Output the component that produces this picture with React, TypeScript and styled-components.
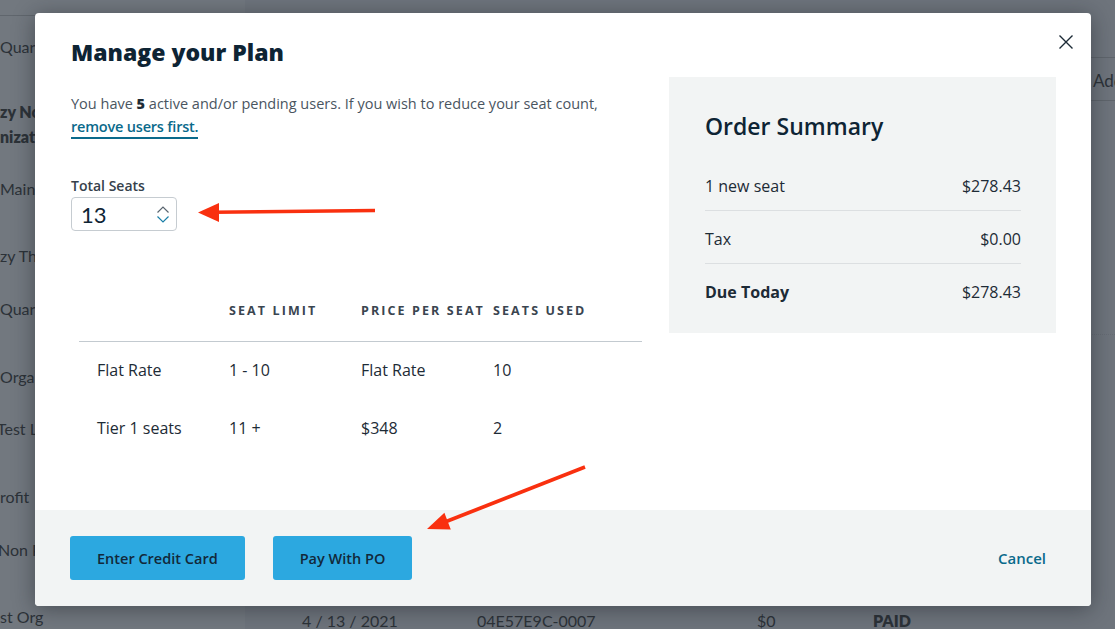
import React from "react";
import styled, { createGlobalStyle } from "styled-components";

const GlobalStyle = createGlobalStyle`
  html, body { margin: 0; padding: 0; }
  body {
    font-family: "Lato", "Open Sans", sans-serif;
    background: #6e747c;
    overflow: hidden;
    width: 1115px;
    height: 629px;
  }
  #root { width: 1115px; height: 629px; }
  * { box-sizing: border-box; }
`;

/* ---------- background page (behind the overlay) ---------- */

const Page = styled.div`
  display: grid;
  grid-template-columns: 245px 1fr;
  width: 1115px;
  height: 629px;
  overflow: hidden;
  color: #2c3238;
  font-size: 16px;
`;

const Sidebar = styled.aside`
  background: #72787f;
  display: flex;
  flex-direction: column;
  overflow: hidden;
`;

const SidebarHead = styled.div`
  height: 16px;
  flex-shrink: 0;
  border-bottom: 1px solid #60666d;
`;

const SideItem = styled.div<{ $gap: number; $shift?: number; $bold?: boolean }>`
  flex-shrink: 0;
  margin-top: ${(p) => p.$gap}px;
  margin-left: ${(p) => p.$shift ?? 0}px;
  line-height: ${(p) => (p.$bold ? 25 : 24)}px;
  font-weight: ${(p) => (p.$bold ? 800 : 400)};
  white-space: nowrap;
`;

const Main = styled.main`
  display: flex;
  flex-direction: column;
  overflow: hidden;
`;

const HeadBand = styled.div`
  flex-shrink: 0;
  margin-top: 57px;
  height: 44px;
  border-top: 1px solid #5f656c;
  border-bottom: 1px solid #5f656c;
  display: flex;
  align-items: center;
  padding: 3px 0 0 848px;
  white-space: nowrap;
  font-size: 17px;
`;

const FaintRule = styled.div`
  flex-shrink: 0;
  margin-top: 233px;
  border-top: 1px dotted #666c74;
`;

const BottomRow = styled.div`
  flex-shrink: 0;
  margin-top: 274px;
  display: grid;
  grid-template-columns: 175px 280px 116px auto;
  padding-left: 57px;
  line-height: 24px;
  font-size: 16px;
  white-space: nowrap;
`;

const Strong = styled.span`
  font-weight: 800;
`;

/* ---------- modal ---------- */

const Modal = styled.section`
  position: absolute;
  left: 35px;
  top: 13px;
  width: 1056px;
  height: 593px;
  background: #ffffff;
  border-radius: 4px;
  box-shadow: 0 3px 22px rgba(20, 24, 30, 0.45);
  display: flex;
  flex-direction: column;
  overflow: hidden;
  color: #1d2b36;
  font-family: "Open Sans", "Lato", sans-serif;
`;

const CloseButton = styled.button`
  position: absolute;
  top: 22px;
  right: 18px;
  width: 14px;
  height: 14px;
  padding: 0;
  border: 0;
  background: none;
  display: flex;
  cursor: pointer;
`;

const ModalBody = styled.div`
  flex: 1;
  display: grid;
  grid-template-columns: 1fr 387px;
  column-gap: 27px;
  padding: 0 35px 0 36px;
`;

const LeftCol = styled.div`
  display: flex;
  flex-direction: column;
  padding-top: 25px;
`;

const Title = styled.h1`
  margin: 0;
  font-size: 23px;
  line-height: 28px;
  font-weight: 800;
  color: #0e2434;
`;

const Intro = styled.p`
  margin: 26px 0 0;
  font-size: 14.5px;
  line-height: 23px;
  color: #4a555f;
`;

const Bold = styled.b`
  font-weight: 800;
  color: #1d2b36;
`;

const TextLink = styled.a`
  color: #0a6a8b;
  font-weight: 600;
  letter-spacing: -0.2px;
  text-decoration: none;
  border-bottom: 2px solid #0a6a8b;
  padding-bottom: 1px;
`;

const FieldLabel = styled.label`
  margin-top: 39px;
  display: block;
  font-size: 14px;
  line-height: 18px;
  font-weight: 600;
  color: #36414b;
`;

const NumberBox = styled.div`
  margin-top: 2px;
  width: 106px;
  height: 34px;
  border: 1px solid #c6ccd1;
  border-radius: 4px;
  display: flex;
  align-items: center;
  justify-content: space-between;
  padding: 0 6px 0 9px;
  font-family: "Lato", sans-serif;
  font-size: 22px;
  color: #0e2434;
`;

const Table = styled.div`
  margin: 72px 0 0 8px;
  display: grid;
  grid-template-columns: 150px 132px 132px 1fr;
`;

const HeadCell = styled.div<{ $first?: boolean }>`
  padding: 0 0 22px ${(p) => (p.$first ? 18 : 0)}px;
  line-height: 16px;
  font-size: 12.5px;
  font-weight: 700;
  letter-spacing: 2.1px;
  color: #3a4550;
  border-bottom: 1px solid #c3cad0;
  white-space: nowrap;
`;

const Cell = styled.div<{ $first?: boolean }>`
  padding: 18px 0 20px ${(p) => (p.$first ? 18 : 0)}px;
  line-height: 20px;
  font-size: 16px;
  color: #1d2b36;
`;

const Summary = styled.aside`
  margin-top: 64px;
  height: 256px;
  background: #f2f4f4;
  padding: 35px 35px 0 36px;
  display: flex;
  flex-direction: column;
`;

const SummaryTitle = styled.h2`
  margin: 0 0 18px;
  font-size: 23px;
  line-height: 28px;
  font-weight: 600;
  color: #0e2434;
`;

const SummaryRow = styled.div<{ $last?: boolean }>`
  display: flex;
  justify-content: space-between;
  padding: 18px 0 13px;
  line-height: 21px;
  font-size: 16px;
  color: #1d2b36;
  border-bottom: ${(p) => (p.$last ? "none" : "1px solid #dcdfe1")};
`;

const SummaryLabel = styled.span<{ $bold?: boolean }>`
  font-weight: ${(p) => (p.$bold ? 700 : 400)};
`;

const Footer = styled.footer`
  height: 96px;
  flex-shrink: 0;
  background: #f2f4f4;
  display: flex;
  align-items: center;
  gap: 28px;
  padding: 0 45px 0 35px;
`;

const PrimaryButton = styled.button`
  height: 44px;
  padding: 0 27px;
  border: 0;
  border-radius: 3px;
  background: #2ca8e0;
  color: #12283a;
  font-family: inherit;
  font-size: 14.5px;
  font-weight: 600;
  cursor: pointer;
`;

const CancelLink = styled.a`
  margin-left: auto;
  color: #0a6a8b;
  font-size: 15px;
  font-weight: 600;
  text-decoration: none;
`;

const Annotations = styled.svg`
  position: fixed;
  left: 0;
  top: 0;
  width: 1115px;
  height: 629px;
  pointer-events: none;
`;

const sideItems = [
  { text: "Quarte", gap: 19 },
  { text: "zy No", text2: "nizati", gap: 40, bold: true },
  { text: "Main", gap: 28 },
  { text: "zy Th", gap: 43 },
  { text: "Quart", gap: 29 },
  { text: "Orga", gap: 44 },
  { text: "Test L", gap: 28, shift: -3 },
  { text: "rofit", gap: 44 },
  { text: "Non P", gap: 29, shift: -2 },
  { text: "st Org", gap: 43 },
];

const tiers = [
  ["Flat Rate", "1 - 10", "Flat Rate", "10"],
  ["Tier 1 seats", "11 +", "$348", "2"],
];

const summary = [
  { label: "1 new seat", value: "$278.43" },
  { label: "Tax", value: "$0.00" },
  { label: "Due Today", value: "$278.43", bold: true },
];

export default function App() {
  return (
    <>
      <GlobalStyle />
      <Page>
        <Sidebar>
          <SidebarHead />
          {sideItems.map((it, i) => (
            <SideItem key={i} $gap={it.gap} $shift={it.shift} $bold={it.bold}>
              {it.text}
              {it.text2 && (
                <>
                  <br />
                  {it.text2}
                </>
              )}
            </SideItem>
          ))}
        </Sidebar>
        <Main>
          <HeadBand>Add</HeadBand>
          <FaintRule />
          <BottomRow>
            <span>4 / 13 / 2021</span>
            <span>04E57E9C-0007</span>
            <span>$0</span>
            <Strong>PAID</Strong>
          </BottomRow>
        </Main>
      </Page>

      <Modal role="dialog" aria-label="Manage your Plan">
        <CloseButton aria-label="Close">
          <svg width="14" height="14" viewBox="0 0 14 14">
            <path d="M0.5 0.5 L13.5 13.5 M13.5 0.5 L0.5 13.5" stroke="#1c2a36" strokeWidth="1.4" fill="none" />
          </svg>
        </CloseButton>
        <ModalBody>
          <LeftCol>
            <Title>Manage your Plan</Title>
            <Intro>
              You have <Bold>5</Bold> active and/or pending users. If you wish to reduce your seat count,
              <br />
              <TextLink href="#">remove users first.</TextLink>
            </Intro>
            <FieldLabel>Total Seats</FieldLabel>
            <NumberBox>
              <span>13</span>
              <svg width="14" height="19" viewBox="0 0 14 19">
                <path d="M1.5 7.5 L7 2 L12.5 7.5" stroke="#5a6670" strokeWidth="1.2" fill="none" />
                <path d="M1.5 11.5 L7 17 L12.5 11.5" stroke="#1b7fa7" strokeWidth="1.2" fill="none" />
              </svg>
            </NumberBox>
            <Table>
              <HeadCell $first />
              <HeadCell>SEAT LIMIT</HeadCell>
              <HeadCell>PRICE PER SEAT</HeadCell>
              <HeadCell>SEATS USED</HeadCell>
              {tiers.map((row, r) =>
                row.map((c, i) => (
                  <Cell key={`${r}-${i}`} $first={i === 0}>
                    {c}
                  </Cell>
                ))
              )}
            </Table>
          </LeftCol>
          <Summary>
            <SummaryTitle>Order Summary</SummaryTitle>
            {summary.map((s, i) => (
              <SummaryRow key={s.label} $last={i === summary.length - 1}>
                <SummaryLabel $bold={s.bold}>{s.label}</SummaryLabel>
                <span>{s.value}</span>
              </SummaryRow>
            ))}
          </Summary>
        </ModalBody>
        <Footer>
          <PrimaryButton>Enter Credit Card</PrimaryButton>
          <PrimaryButton>Pay With PO</PrimaryButton>
          <CancelLink href="#">Cancel</CancelLink>
        </Footer>
      </Modal>

      <Annotations viewBox="0 0 1115 629">
        <line x1="375" y1="210.5" x2="214" y2="212.3" stroke="#f9300f" strokeWidth="3.5" />
        <polygon points="198,212.5 219,203 219,222" fill="#f9300f" />
        <line x1="585" y1="467" x2="445" y2="522" stroke="#f9300f" strokeWidth="3.5" />
        <polygon points="427,529 444.4,512.8 450.8,529.6" fill="#f9300f" />
      </Annotations>
    </>
  );
}
